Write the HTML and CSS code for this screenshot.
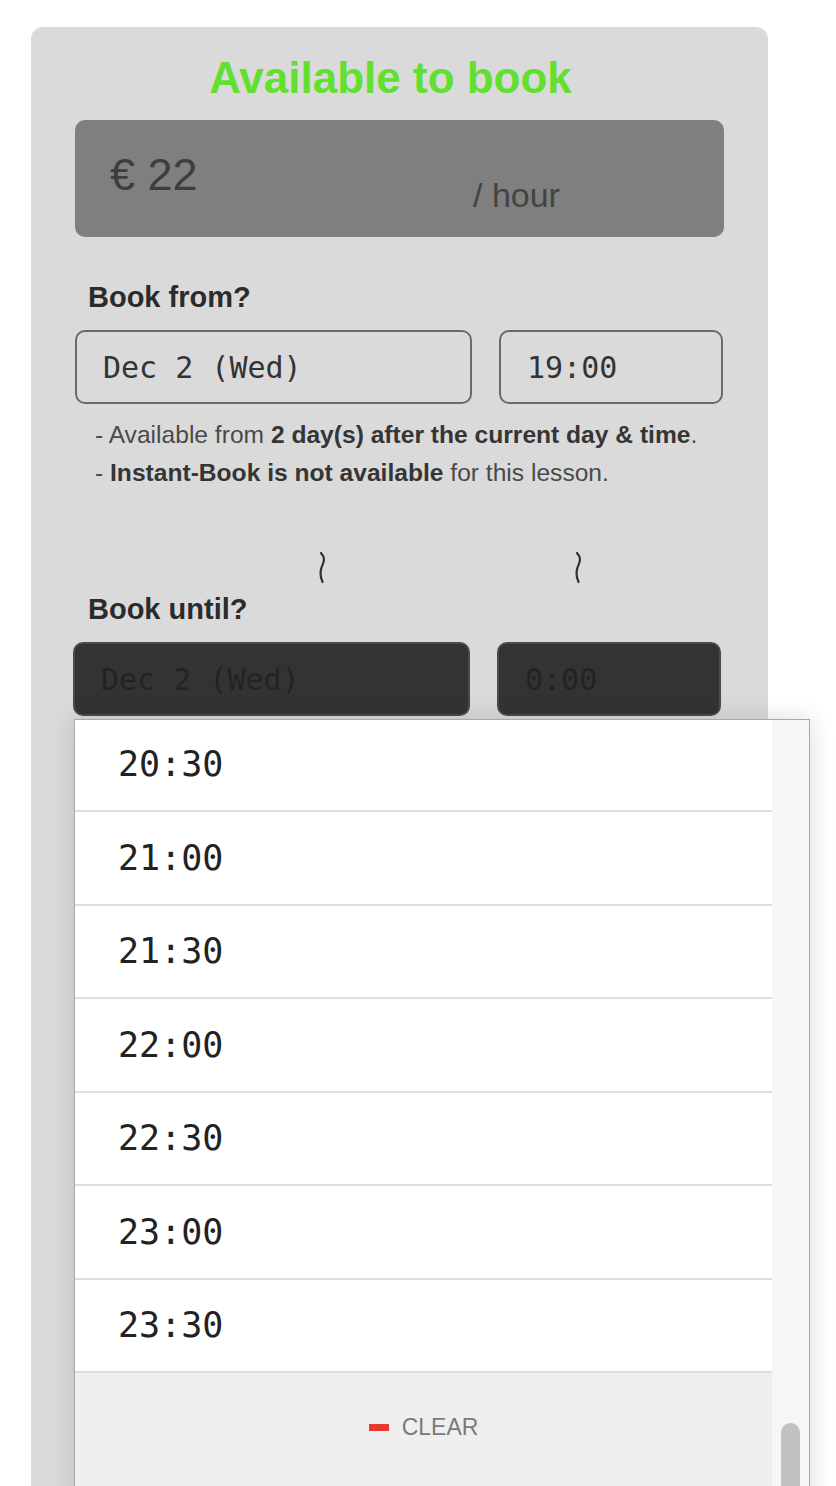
FILE: index.html
```html
<!DOCTYPE html>
<html lang="en">
<head>
<meta charset="utf-8">
<title>Available to book</title>
<link rel="stylesheet" href="styles.css">
</head>
<body>
<div class="card">
  <h1 class="title">Available to book</h1>
  <div class="price">
    <span class="amount">€ 22</span>
    <span class="unit">/ hour</span>
  </div>
  <div class="label">Book from?</div>
  <div class="fields">
    <div class="field">Dec 2 (Wed)</div>
    <div class="field">19:00</div>
  </div>
  <ul class="notes">
    <li>- Available from <b>2 day(s) after the current day &amp; time</b>.</li>
    <li>- <b>Instant-Book is not available</b> for this lesson.</li>
  </ul>
  <div class="waves">
    <svg class="wave" width="12" height="32" viewBox="0 0 12 32" aria-hidden="true"><path d="M5 1 C8 4, 9 8, 6.5 13 C4 18, 3.5 23, 6.5 30" fill="none" stroke="#333" stroke-width="2.2" stroke-linecap="round"/></svg>
    <svg class="wave" width="12" height="32" viewBox="0 0 12 32" aria-hidden="true"><path d="M5 1 C8 4, 9 8, 6.5 13 C4 18, 3.5 23, 6.5 30" fill="none" stroke="#333" stroke-width="2.2" stroke-linecap="round"/></svg>
  </div>
  <div class="label until-label">Book until?</div>
  <div class="fields until">
    <div class="field">Dec 2 (Wed)</div>
    <div class="field">0:00</div>
  </div>

  <div class="dropdown">
    <div class="list-col">
      <ul class="list">
        <li>20:30</li>
        <li>21:00</li>
        <li>21:30</li>
        <li>22:00</li>
        <li>22:30</li>
        <li>23:00</li>
        <li>23:30</li>
      </ul>
      <div class="clear"><span class="dash"></span><span class="clear-text">CLEAR</span></div>
    </div>
    <div class="scroll"><div class="thumb"></div></div>
  </div>
</div>
</body>
</html>
```

FILE: styles.css
```css
html, body {
  margin: 0;
  padding: 0;
  background: #ffffff;
  height: 1486px;
  overflow: hidden;
}
body {
  font-family: "Liberation Sans", Arial, sans-serif;
}
.card {
  position: relative;
  margin: 27px 0 0 31px;
  width: 737px;
  height: 1500px;
  box-sizing: border-box;
  padding: 26px 44px 0;
  background: #dadada;
  border-radius: 12px 12px 0 0;
}
.title {
  margin: 0 18px 17px 0;
  font-size: 44px;
  line-height: 50px;
  font-weight: 700;
  color: #62e02f;
  text-align: center;
}
.price {
  height: 117px;
  box-sizing: border-box;
  background: #7f7f7f;
  border-radius: 10px;
  padding: 33px 0 0 35px;
  display: grid;
  grid-template-columns: 363px auto;
  align-items: start;
}
.amount {
  font-size: 45px;
  line-height: 44px;
  color: #3d3d3d;
}
.unit {
  font-size: 34px;
  line-height: 34px;
  color: #444444;
  margin-top: 25px;
}
.label {
  font-size: 29px;
  line-height: 28px;
  font-weight: 700;
  color: #2b2b2b;
  margin: 46px 0 0 13px;
}
.until-label {
  margin-top: 7px;
}
.fields {
  display: grid;
  grid-template-columns: 397px 224px;
  column-gap: 27px;
  margin-top: 19px;
}
.field {
  height: 74px;
  box-sizing: border-box;
  border: 2px solid #6a6a6a;
  border-radius: 10px;
  display: flex;
  align-items: center;
  padding-left: 26px;
  font-family: "DejaVu Sans Mono", "Liberation Mono", monospace;
  font-size: 30px;
  color: #333333;
}
.until {
  margin-left: -2px;
}
.until .field {
  background: #333333;
  border-color: #4a4a4a;
  color: #232323;
}
.notes {
  list-style: none;
  margin: 12px 0 0;
  padding: 0 0 0 20px;
  font-size: 24.6px;
  line-height: 38px;
  color: #4a4a4a;
}
.notes b {
  color: #353535;
}
.waves {
  display: flex;
  align-items: center;
  margin-top: 56px;
  padding-left: 241px;
  gap: 244px;
  height: 40px;
}
.wave {
  display: block;
}
.dropdown {
  position: absolute;
  left: 43px;
  top: 692px;
  width: 736px;
  height: 800px;
  box-sizing: border-box;
  border: 1px solid #a9a9a9;
  background: #f6f6f6;
  box-shadow: 0 0 24px rgba(0, 0, 0, 0.14);
  display: grid;
  grid-template-columns: 697px 1fr;
  overflow: hidden;
}
.list {
  list-style: none;
  margin: -1.5px 0 0;
  padding: 0;
}
.list li {
  height: 91.5px;
  border-bottom: 2px solid #dedede;
  background: #ffffff;
  display: flex;
  align-items: center;
  padding-left: 43px;
  font-family: "DejaVu Sans Mono", "Liberation Mono", monospace;
  font-size: 35px;
  color: #222222;
}
.clear {
  background: #efefef;
  height: 140px;
  display: flex;
  justify-content: center;
  align-items: flex-start;
  padding-top: 42px;
  box-sizing: border-box;
  line-height: 24px;
}
.dash {
  width: 20px;
  height: 7px;
  background: #e8392f;
  margin: 9px 13px 0 0;
}
.clear-text {
  font-size: 23px;
  color: #7a7a7a;
}
.scroll {
  background: #f6f6f6;
  padding: 703px 0 0 9px;
}
.thumb {
  width: 19px;
  height: 100px;
  border-radius: 10px;
  background: #c2c2c2;
}
```
